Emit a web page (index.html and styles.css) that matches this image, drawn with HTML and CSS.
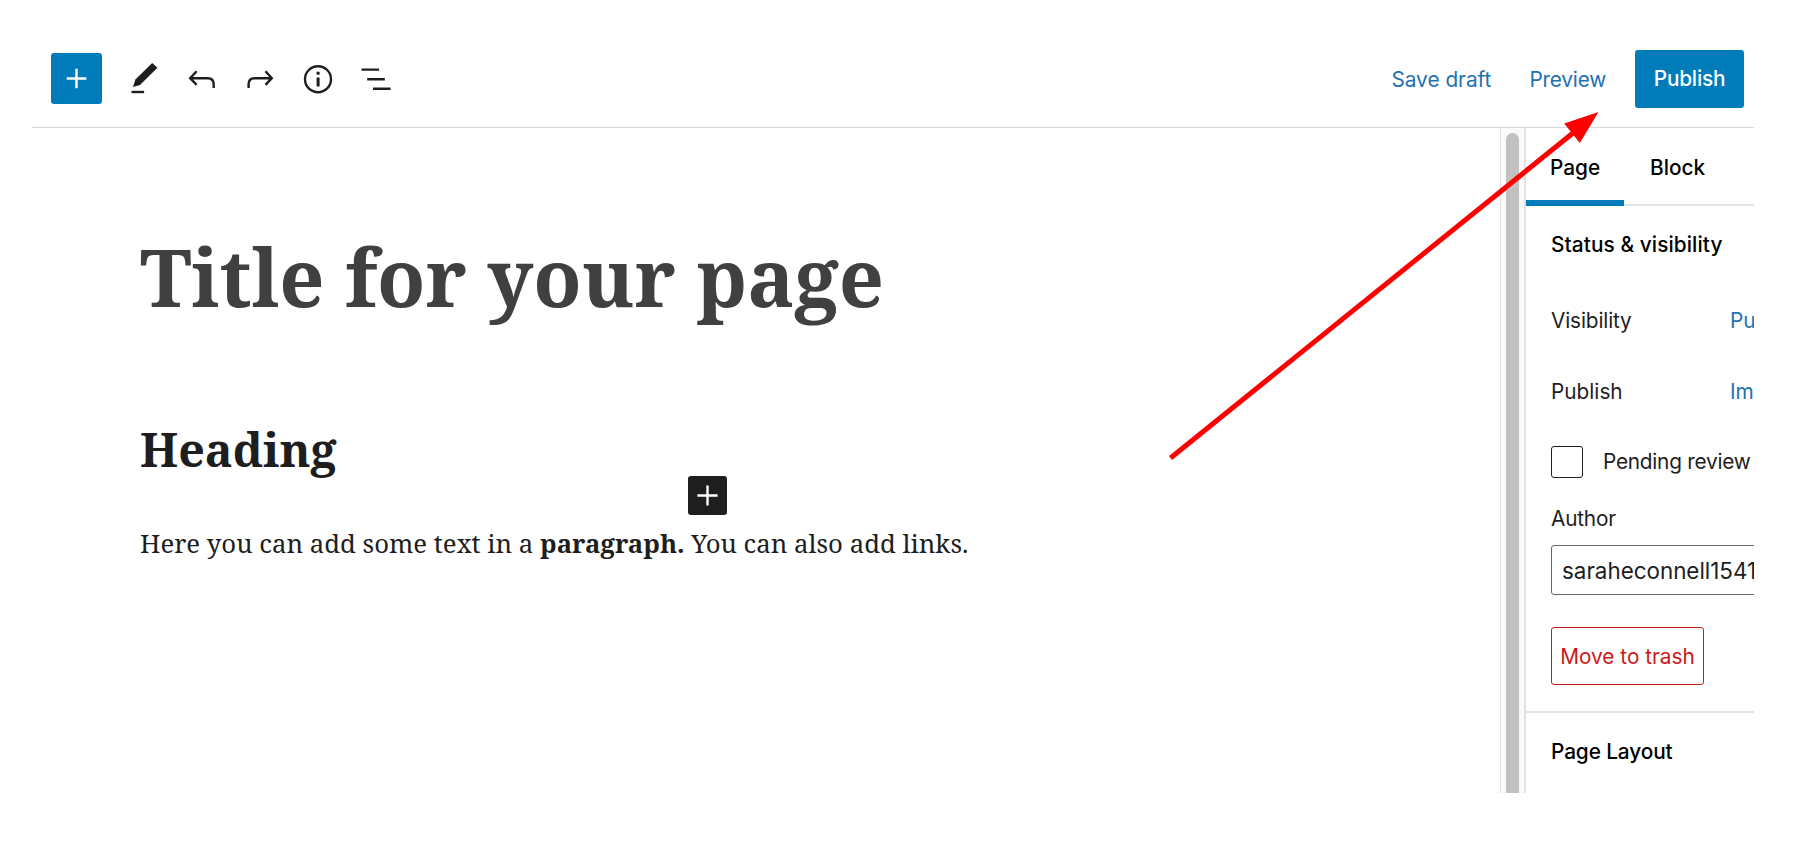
FILE: index.html
```
<!DOCTYPE html>
<html lang="en">
<head>
<meta charset="utf-8">
<title>Edit page</title>
<link rel="stylesheet" href="styles.css">
</head>
<body>
<div class="editor">
  <header class="header">
    <div class="tools">
      <button class="tool-add" aria-label="Add block"><svg width="51" height="51" viewBox="0 0 51 51"><path d="M25.5 15.7v19.6M15.7 25.5h19.6"/></svg></button>
      <button class="tool" aria-label="Edit"><svg width="58" height="58" viewBox="0 0 58 58"><path class="fill" d="M18 37 20.4 29.6 37.2 13 42.4 17.8 25 35z"/><path d="M16.5 42h12.6"/></svg></button>
      <button class="tool" aria-label="Undo"><svg width="58" height="58" viewBox="0 0 58 58"><path d="M23.6 21.2 17.2 28.2 23.6 34.8M17.4 28.2h17.3q6 0 6 6v3.8"/></svg></button>
      <button class="tool" aria-label="Redo"><svg width="58" height="58" viewBox="0 0 58 58"><path d="M34.5 21.2 40.8 28.2 34.5 34.8M40.6 28.2h-17q-6 0-6 6v3.8"/></svg></button>
      <button class="tool" aria-label="Details"><svg width="58" height="58" viewBox="0 0 58 58"><circle cx="29" cy="29.2" r="13"/><path class="fill" d="M27.6 21.7h3v3h-3zM27.6 27.6h3v9h-3z"/></svg></button>
      <button class="tool" aria-label="Outline"><svg width="58" height="58" viewBox="0 0 58 58"><path d="M14.5 19.6h17.6M20.2 29.2h17.6M26 38.8h17.6"/></svg></button>
    </div>
    <div class="actions">
      <a class="link save">Save draft</a>
      <a class="link preview">Preview</a>
      <button class="publish">Publish</button>
    </div>
  </header>
  <div class="body">
    <main class="canvas">
      <h1 class="title">Title for your page</h1>
      <h2 class="heading">Heading</h2>
      <p class="paragraph">Here you can add some text in a <b>paragraph.</b> You can also add links.</p>
    </main>
    <div class="scrollbar"><div class="thumb"></div></div>
    <aside class="sidebar">
      <nav class="tabs"><span class="tab active">Page</span><span class="tab">Block</span></nav>
      <section class="panel">
        <h3 class="panel-title">Status &amp; visibility</h3>
        <div class="row visibility"><span class="label">Visibility</span><a class="link">Pu</a></div>
        <div class="row publish-row"><span class="label">Publish</span><a class="link">Im</a></div>
        <div class="row review"><span class="checkbox"></span><span class="review-label">Pending review</span></div>
        <div class="author">Author</div>
        <div class="select">saraheconnell1541</div>
        <button class="trash">Move to trash</button>
      </section>
      <section class="panel layout"><h3 class="panel-title">Page Layout</h3></section>
    </aside>
  </div>
</div>
<button class="inserter" aria-label="Insert block"><svg width="39" height="39" viewBox="0 0 39 39"><path d="M19.5 9.4v20.2M9.4 19.5h20.2"/></svg></button>
<svg class="arrow" width="440" height="360" viewBox="0 0 440 360"><path class="shaft" d="M10.5 358 413 33"/><path class="head" d="M438.5 12 404.2 23.6 419.8 43z"/></svg>
</body>
</html>
```
FILE: styles.css
```
* { box-sizing: border-box; }
body {
  margin: 0;
  width: 1804px;
  height: 846px;
  padding: 29px 50px 53px 32px;
  overflow: hidden;
  background: #fff;
  color: #1e1e1e;
  font: 20.8px/26px Inter, Roboto, sans-serif;
}
h1, h2, h3, p { margin: 0; }
button { padding: 0; border: 0; background: none; font: inherit; }
svg { display: block; fill: none; stroke: #1e1e1e; stroke-width: 2.4; }
svg .fill { fill: #1e1e1e; stroke: none; }
.editor { height: 764px; display: flex; flex-direction: column; overflow: hidden; }
.header {
  height: 99px;
  flex: none;
  display: flex;
  justify-content: space-between;
  align-items: center;
  padding: 1px 10px 0 19px;
  border-bottom: 1px solid #d8d8d8;
}
.tools { display: flex; align-items: center; }
.tool-add { margin-right: 13px; border-radius: 3px; background: #007cba; }
.tool-add svg { stroke: #fff; }
.tool { width: 58px; }
.actions { display: flex; align-items: center; }
.link { color: #2271b1; }
.save, .preview { padding-top: 2px; }
.save { margin-right: 38px; }
.preview { margin-right: 29px; letter-spacing: -.2px; }
.publish {
  width: 109px;
  height: 58px;
  padding-top: 1px;
  border-radius: 3px;
  background: #007cba;
  color: #fff;
  font-weight: 500;
  letter-spacing: -.2px;
}
.body { flex: 1; display: flex; min-height: 0; }
.canvas { flex: 1; padding: 99px 0 0 108px; font-family: "Noto Serif", "DejaVu Serif Condensed", serif; }
.title {
  font-size: 79px;
  font-weight: 700;
  line-height: 100px;
  color: #404040;
}
.heading { margin-top: 92px; font-size: 46.6px; line-height: 60px; }
.paragraph { margin-top: 44px; font-size: 25.75px; line-height: 40px; }
.scrollbar {
  width: 26px;
  padding: 5px 6px 0 5px;
  border-left: 1px solid #e2e2e2;
  border-right: 2px solid #e2e2e2;
  background: #fafafa;
}
.thumb { width: 13px; height: 100%; border-radius: 7px 7px 0 0; background: #c1c1c1; }
.sidebar { width: 228px; overflow: hidden; white-space: nowrap; }
.tabs { height: 78px; display: flex; border-bottom: 2px solid #e4e4e4; font-weight: 500; color: #000; }
.tab { height: 78px; padding: 27px 26px 0; }
.tab.active { width: 98px; padding-left: 24px; border-bottom: 6px solid #007cba; }
.panel { padding-left: 25px; }
.panel-title { font-size: 20.8px; line-height: 77px; font-weight: 500; letter-spacing: .1px; color: #000; }
.row { display: flex; align-items: center; }
.label { width: 179px; flex: none; }
.visibility { height: 75px; letter-spacing: -.15px; }
.publish-row { height: 67px; }
.review { height: 74px; gap: 20px; letter-spacing: -.25px; }
.checkbox { width: 32px; height: 32px; flex: none; border: 1.5px solid #1e1e1e; border-radius: 3px; }
.author { line-height: 39px; letter-spacing: -.2px; }
.select {
  width: 300px;
  height: 50px;
  margin-top: 7px;
  padding-left: 10px;
  border: 1.5px solid #666;
  border-radius: 3px;
  font-size: 22.4px;
  line-height: 49px;
}
.trash {
  display: block;
  width: 153px;
  height: 58px;
  padding-top: 2px;
  margin: 32px 0 26px;
  border: 1.5px solid #cc1818;
  border-radius: 3px;
  color: #cc1818;
}
.layout { border-top: 2px solid #e4e4e4; }
.layout .panel-title { letter-spacing: -.1px; }
.inserter { position: absolute; left: 688px; top: 476px; border-radius: 3px; background: #1e1e1e; }
.inserter svg { stroke: #fff; }
.arrow { position: absolute; left: 1160px; top: 100px; }
.arrow .shaft { stroke: #f00; stroke-width: 5; }
.arrow .head { fill: #f00; stroke: none; }
```
